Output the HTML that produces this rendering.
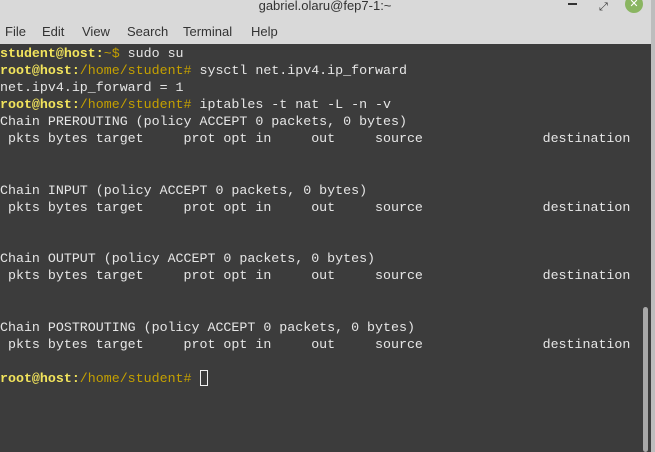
<!DOCTYPE html>
<html><head><meta charset="utf-8"><style>
html,body{margin:0;padding:0;width:655px;height:452px;overflow:hidden;background:#d9d9d9;}
#title{position:absolute;left:0;top:0;width:655px;height:22px;background:#d9d9d9;}
#title .t{position:absolute;left:0;width:650px;top:-2px;text-align:center;font:13px "Liberation Sans",sans-serif;color:#333;}
#menu{position:absolute;left:0;top:22px;width:655px;height:22px;background:#d9d9d9;font:13px "Liberation Sans",sans-serif;color:#333;}
#menu span{position:absolute;top:2px;}
#term{position:absolute;left:0;top:44px;width:651px;height:408px;background:#3c3c3c;overflow:hidden;}
#strip{position:absolute;left:651px;top:0;width:4px;height:452px;background:#bdbdbd;}
pre{position:absolute;left:0;top:1px;margin:0;font:13.3px/17.1px "Liberation Mono",monospace;color:#e6e6e6;}
.u{color:#f2e45c;font-weight:bold}
.p{color:#c4a000}
.cur{display:inline-block;width:8px;height:16px;border:1.5px solid #f0f0f0;box-sizing:border-box;vertical-align:-4px;}
#sb{position:absolute;left:643px;width:5px;height:145px;background:#a8a8a8;border-radius:3px;}
</style></head><body>
<div id="title"><div class="t">gabriel.olaru@fep7-1:~</div>
<div style="position:absolute;left:568px;top:3px;width:9px;height:2px;background:#333"></div>
<div style="position:absolute;left:599px;top:0px;font:11px 'DejaVu Sans',sans-serif;color:#333">⤢</div>
<div style="position:absolute;left:625px;top:-5px;width:18px;height:18px;border-radius:50%;background:#8ab561;color:#fff;font:bold 11px 'DejaVu Sans',sans-serif;text-align:center;line-height:18px">✕</div>
</div>
<div id="menu"><span style="left:5px">File</span><span style="left:42px">Edit</span><span style="left:82px">View</span><span style="left:127px">Search</span><span style="left:183px">Terminal</span><span style="left:251px">Help</span></div>
<div id="term"><pre><span class="u">student@host:</span><span class="p">~$</span> sudo su
<span class="u">root@host:</span><span class="p">/home/student#</span> sysctl net.ipv4.ip_forward
net.ipv4.ip_forward = 1
<span class="u">root@host:</span><span class="p">/home/student#</span> iptables -t nat -L -n -v
Chain PREROUTING (policy ACCEPT 0 packets, 0 bytes)
 pkts bytes target     prot opt in     out     source               destination


Chain INPUT (policy ACCEPT 0 packets, 0 bytes)
 pkts bytes target     prot opt in     out     source               destination


Chain OUTPUT (policy ACCEPT 0 packets, 0 bytes)
 pkts bytes target     prot opt in     out     source               destination


Chain POSTROUTING (policy ACCEPT 0 packets, 0 bytes)
 pkts bytes target     prot opt in     out     source               destination

<span class="u">root@host:</span><span class="p">/home/student#</span> <span class="cur"></span></pre>
<div id="sb" style="top:263px"></div></div>
<div id="strip"></div>
</body></html>
